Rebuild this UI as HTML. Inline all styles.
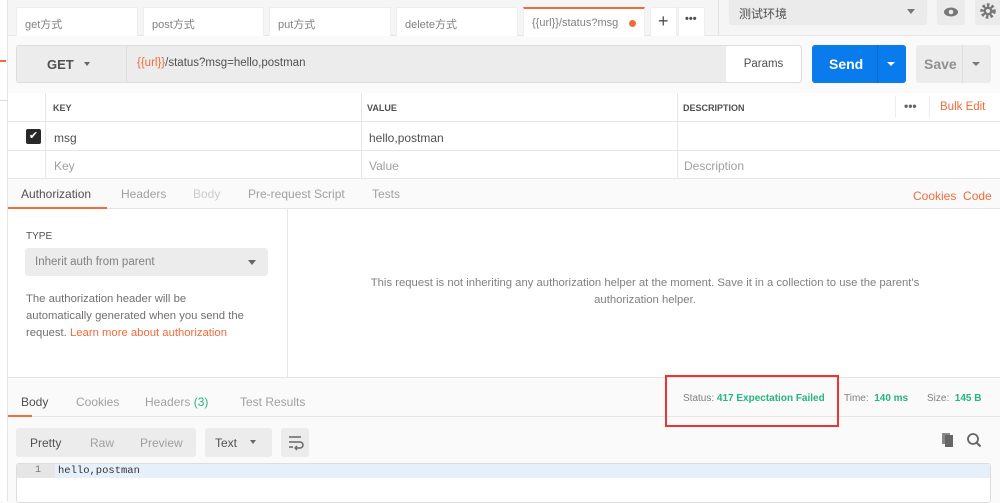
<!DOCTYPE html>
<html><head><meta charset="utf-8"><style>
*{margin:0;padding:0;box-sizing:border-box}
body{width:1000px;height:501px;overflow:hidden;background:#fafafa;font-family:"Liberation Sans","Noto Sans CJK SC",sans-serif;font-size:12px;color:#505050;position:relative}
.a{position:absolute}
.tab{position:absolute;top:7px;height:29px;background:#fff;border:1px solid #eee;border-bottom:none;color:#808080;font-size:11px;padding:8px 0 0 8px}
.g{color:#a0a0a0}
.o{color:#f26b3a}
.gr{color:#26b47f}
.hd{font-size:9px;font-weight:bold;color:#505050}
</style></head><body>
<div class="a" style="left:0;top:0;width:8px;height:501px;background:#fff;border-right:1px solid #e4e4e4"></div>
<div class="a" style="left:0;top:60px;width:6px;height:2px;background:#f26b3a"></div>
<div class="a" style="left:0;top:100px;width:8px;height:1px;background:#ddd"></div>
<div class="a" style="left:8px;top:0;width:992px;height:36px;background:#f5f5f5;border-bottom:1px solid #e6e6e6"></div>
<div class="tab" style="left:16px;width:122px">get方式</div>
<div class="tab" style="left:143px;width:121px">post方式</div>
<div class="tab" style="left:269px;width:122px">put方式</div>
<div class="tab" style="left:396px;width:122px">delete方式</div>
<div class="tab" style="left:523px;width:122px;border-top:2px solid #f26b3a;height:30px">{{url}}/status?msg<span class="a" style="left:105px;top:11px;width:7px;height:7px;border-radius:50%;background:#f26b3a"></span></div>
<div class="tab" style="left:650px;width:27px;font-size:18px;padding:3px 0 0 7px;color:#505050">+</div>
<div class="tab" style="left:678px;width:27px;padding:5px 0 0 6px;color:#505050;font-weight:bold">•••</div>
<div class="a" style="left:718px;top:0;width:1px;height:35px;background:#e4e4e4"></div>
<div class="a" style="left:729px;top:0;width:198px;height:25px;background:#ebebeb;border-radius:0 0 3px 3px;padding:5px 10px;font-size:12px;color:#505050">测试环境<span class="a" style="right:12px;top:9px;border:4px solid transparent;border-top:5px solid #777"></span></div>
<div class="a" style="left:937px;top:0;width:28px;height:25px;background:#ebebeb;border-radius:0 0 3px 3px"><svg width="28" height="25"><ellipse cx="14" cy="12" rx="7" ry="4.5" fill="#777"/><circle cx="14" cy="12" r="2.3" fill="#ebebeb"/></svg></div>
<div class="a" style="left:975px;top:0;width:25px;height:25px;background:#ebebeb;border-radius:0 0 0 3px"><svg width="25" height="25"><circle cx="13" cy="11" r="6" fill="none" stroke="#777" stroke-width="3.5" stroke-dasharray="2.5 2"/><circle cx="13" cy="11" r="4.5" fill="#777"/><circle cx="13" cy="11" r="2" fill="#ebebeb"/></svg></div>

<div class="a" style="left:16px;top:45px;width:786px;height:38px;background:#ececec;border:1px solid #ddd;border-radius:3px"></div>
<div class="a" style="left:126px;top:46px;width:1px;height:36px;background:#ddd"></div>
<div class="a" style="left:47px;top:57px;font-size:13px;color:#505050;font-weight:bold">GET</div>
<div class="a" style="left:84px;top:62px;border:3.5px solid transparent;border-top:4px solid #666"></div>
<div class="a" style="left:137px;top:57px;font-size:11.5px;color:#505050"><span class="o">{{url}}</span>/status?msg=hello,postman</div>
<div class="a" style="left:726px;top:46px;width:75px;height:36px;background:#fff;border-radius:0 3px 3px 0;text-align:center;padding-top:12px;font-size:11.5px">Params</div>
<div class="a" style="left:812px;top:45px;width:94px;height:38px;background:#097bed;border-radius:3px"></div>
<div class="a" style="left:829px;top:56px;color:#fff;font-weight:bold;font-size:14px">Send</div>
<div class="a" style="left:877px;top:45px;width:1px;height:38px;background:#0a6bcc"></div>
<div class="a" style="left:887px;top:62px;border:4px solid transparent;border-top:4px solid #fff"></div>
<div class="a" style="left:916px;top:45px;width:75px;height:38px;background:#ececec;border-radius:3px"></div>
<div class="a" style="left:924px;top:56px;color:#909090;font-weight:bold;font-size:14px">Save</div>
<div class="a" style="left:962px;top:45px;width:1px;height:38px;background:#ddd"></div>
<div class="a" style="left:972px;top:62px;border:4px solid transparent;border-top:4px solid #777"></div>

<div class="a" style="left:8px;top:93px;width:992px;height:86px;background:#fff"></div>
<div class="a" style="left:8px;top:93px;width:992px;height:29px;border-bottom:1px solid #e6e6e6"></div>
<div class="a" style="left:8px;top:150px;width:992px;height:1px;background:#e6e6e6"></div>
<div class="a" style="left:8px;top:178px;width:992px;height:1px;background:#e6e6e6"></div>
<div class="a" style="left:45px;top:93px;width:1px;height:85px;background:#e6e6e6"></div>
<div class="a" style="left:361px;top:93px;width:1px;height:85px;background:#e6e6e6"></div>
<div class="a" style="left:677px;top:93px;width:1px;height:85px;background:#e6e6e6"></div>
<div class="a" style="left:895px;top:96px;width:1px;height:22px;background:#eee"></div>
<div class="a" style="left:929px;top:96px;width:1px;height:22px;background:#eee"></div>
<div class="a hd" style="left:53px;top:103px">KEY</div>
<div class="a hd" style="left:367px;top:103px">VALUE</div>
<div class="a hd" style="left:683px;top:103px">DESCRIPTION</div>
<div class="a" style="left:904px;top:99px;font-weight:bold;color:#666">•••</div>
<div class="a o" style="left:940px;top:101px;font-size:11.5px">Bulk Edit</div>
<div class="a" style="left:26px;top:129px;width:15px;height:15px;background:#282828;border-radius:2px;color:#fff;font-size:11px;text-align:center;line-height:15px">✔</div>
<div class="a" style="left:54px;top:131px">msg</div>
<div class="a" style="left:369px;top:131px">hello,postman</div>
<div class="a g" style="left:54px;top:159px">Key</div>
<div class="a g" style="left:369px;top:159px">Value</div>
<div class="a g" style="left:684px;top:159px">Description</div>

<div class="a" style="left:8px;top:208px;width:992px;height:1px;background:#e6e6e6"></div>
<div class="a" style="left:8px;top:207px;width:99px;height:2px;background:#f26b3a"></div>
<div class="a" style="left:21px;top:187px;color:#505050">Authorization</div>
<div class="a g" style="left:121px;top:187px">Headers</div>
<div class="a" style="left:193px;top:187px;color:#ccc">Body</div>
<div class="a g" style="left:248px;top:187px">Pre-request Script</div>
<div class="a g" style="left:372px;top:187px">Tests</div>
<div class="a o" style="left:913px;top:189px">Cookies&nbsp; Code</div>

<div class="a" style="left:8px;top:209px;width:992px;height:169px;background:#fff;border-bottom:1px solid #e6e6e6"></div>
<div class="a" style="left:287px;top:209px;width:1px;height:169px;background:#e6e6e6"></div>
<div class="a" style="left:26px;top:231px;font-size:10px;color:#505050">TYPE</div>
<div class="a" style="left:25px;top:248px;width:243px;height:28px;background:#ececec;border-radius:3px;padding:8px 10px;color:#808080;font-size:11.5px">Inherit auth from parent<span class="a" style="right:12px;top:12px;border:4px solid transparent;border-top:5px solid #666"></span></div>
<div class="a" style="left:26px;top:291px;width:220px;line-height:17px;font-size:11.3px;color:#707070">The authorization header will be automatically generated when you send the request. <span class="o">Learn more about authorization</span></div>
<div class="a" style="left:345px;top:275px;width:600px;text-align:center;line-height:17px;font-size:11.3px;color:#808080">This request is not inheriting any authorization helper at the moment. Save it in a collection to use the parent's authorization helper.</div>

<div class="a" style="left:8px;top:416px;width:992px;height:1px;background:#e6e6e6"></div>
<div class="a" style="left:8px;top:415px;width:24px;height:2px;background:#f26b3a"></div>
<div class="a" style="left:21px;top:395px;color:#505050">Body</div>
<div class="a g" style="left:76px;top:395px">Cookies</div>
<div class="a g" style="left:145px;top:395px">Headers <span class="gr">(3)</span></div>
<div class="a g" style="left:240px;top:395px">Test Results</div>
<div class="a" style="left:683px;top:393px;font-size:10px;color:#808080">Status: <span class="gr" style="font-weight:bold">417 Expectation Failed</span></div>
<div class="a" style="left:844px;top:393px;font-size:10px;color:#808080">Time: <span class="gr" style="font-weight:bold">&nbsp;140 ms</span></div>
<div class="a" style="left:927px;top:393px;font-size:10px;color:#808080">Size: <span class="gr" style="font-weight:bold">&nbsp;145 B</span></div>
<div class="a" style="left:665px;top:375px;width:174px;height:52px;border:2px solid #ee3333"></div>

<div class="a" style="left:16px;top:428px;width:180px;height:29px;background:#ececec;border-radius:3px"></div>
<div class="a" style="left:30px;top:436px;color:#505050">Pretty</div>
<div class="a g" style="left:90px;top:436px">Raw</div>
<div class="a g" style="left:140px;top:436px">Preview</div>
<div class="a" style="left:205px;top:428px;width:67px;height:29px;background:#ececec;border-radius:3px;padding:8px 10px">Text<span class="a" style="left:45px;top:12px;border:3.5px solid transparent;border-top:4px solid #666"></span></div>
<div class="a" style="left:281px;top:428px;width:28px;height:29px;background:#ececec;border-radius:3px"><svg width="28" height="29"><path d="M8 9h12M8 14h11a3 3 0 0 1 0 6h-4M8 19h4" fill="none" stroke="#666" stroke-width="1.5"/><path d="M16 18l-2 2 2 2" fill="none" stroke="#666" stroke-width="1.3"/></svg></div>
<svg class="a" style="left:941px;top:432px" width="18" height="16"><rect x="1" y="1" width="8" height="11" fill="#888"/><rect x="4" y="3" width="8" height="12" fill="#666"/></svg>
<svg class="a" style="left:966px;top:432px" width="16" height="16"><circle cx="7" cy="7" r="5" fill="none" stroke="#666" stroke-width="1.8"/><path d="M10.5 10.5l4 4" stroke="#666" stroke-width="2"/></svg>

<div class="a" style="left:16px;top:463px;width:975px;height:40px;background:#fff;border:1px solid #ddd;border-radius:3px"></div>
<div class="a" style="left:55px;top:464px;width:935px;height:14px;background:#e6f0fb"></div>
<div class="a" style="left:17px;top:464px;width:38px;height:14px;background:#e6e6e6;font-family:'Liberation Mono',monospace;font-size:10px;text-align:right;padding-right:14px;line-height:14px;color:#777">1</div>
<div class="a" style="left:58px;top:464px;font-family:'Liberation Mono',monospace;font-size:10.5px;line-height:14px;color:#333">hello,postman</div>
</body></html>
